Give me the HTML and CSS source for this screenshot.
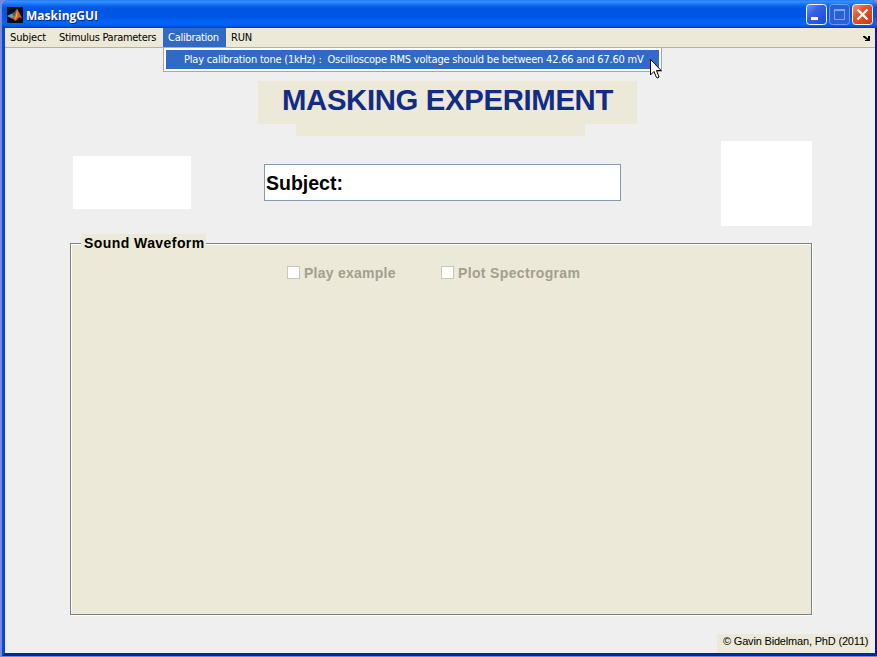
FILE: index.html
```html
<!DOCTYPE html>
<html lang="en">
<head>
<meta charset="utf-8">
<title>MaskingGUI</title>
<link rel="stylesheet" href="styles.css">
</head>
<body>
<div class="window">
  <header class="titlebar">
    <svg class="logo" width="16" height="16" viewBox="0 0 16 16">
      <rect width="16" height="16" fill="#070b12"/>
      <path d="M0 9 L5 6.500 L8 9 L5 11.500 Z" fill="#5fa0b8"/>
      <path d="M5 6.500 Q8 5 10 1.500 L9 8 L7 10 Z" fill="#35657a"/>
      <path d="M10 1.500 Q12 5 15.500 12 Q13 9.500 11 11.500 Q9 14.500 7.500 13.500 Q7 12 5 11.500 Q9 8 10 1.500Z" fill="#d65a22"/>
      <path d="M10 2 Q9.500 8 7.500 13 Q11.500 10 10 2Z" fill="#f8b04a"/>
    </svg>
    <span class="title">MaskingGUI</span>
    <div class="controls">
      <svg class="btn" width="21" height="21" viewBox="0 0 21 21">
        <defs>
          <linearGradient id="blue" x1="0" y1="0" x2="1" y2="1"><stop offset="0" stop-color="#6d96f5"/><stop offset=".4" stop-color="#2f60e6"/><stop offset="1" stop-color="#1b4bd6"/></linearGradient>
          <linearGradient id="red" x1="0" y1="0" x2="1" y2="1"><stop offset="0" stop-color="#ee9b80"/><stop offset=".4" stop-color="#e0532c"/><stop offset="1" stop-color="#c53a12"/></linearGradient>
        </defs>
        <rect x=".5" y=".5" width="20" height="20" rx="3" fill="url(#blue)" stroke="#f0f5ff"/>
        <rect x="5" y="13" width="7" height="3" fill="#fff"/>
      </svg>
      <svg class="btn" width="21" height="21" viewBox="0 0 21 21">
        <rect x=".5" y=".5" width="20" height="20" rx="3" fill="#2a5fdc" stroke="#6f9bf0"/>
        <path d="M5.500 5V15.500H15.500V5" fill="none" stroke="#7fa2f2"/><path d="M5 6H16" stroke="#7fa2f2" stroke-width="2"/>
      </svg>
      <svg class="btn" width="21" height="21" viewBox="0 0 21 21">
        <rect x=".5" y=".5" width="20" height="20" rx="3" fill="url(#red)" stroke="#f8f2f2"/>
        <path d="M5.500 5.500L15.500 15.500M15.500 5.500L5.500 15.500" stroke="#fff" stroke-width="2.300"/>
      </svg>
    </div>
  </header>
  <nav class="menubar">
    <span class="item subject">Subject</span>
    <span class="item stimulus">Stimulus Parameters</span>
    <div class="item open"><span>Calibration</span>
      <div class="dropdown"><div class="entry">Play calibration tone (1kHz) :&nbsp; Oscilloscope RMS voltage should be between 42.66 and 67.60 mV</div></div>
      <svg class="cursor" width="12" height="20" viewBox="0 0 12 20"><path d="M.5 .5V16L4 12.500L6.500 18.500Q8 19.500 9 18L6.500 11.500H11.200Z" fill="#fff" stroke="#000"/></svg>
    </div>
    <span class="item run">RUN</span>
    <svg class="dock" width="7" height="5" viewBox="0 0 7 5"><path d="M0 0H2L5 2.500V0H7V5H2V4H4L0 1Z" fill="#000"/></svg>
  </nav>
  <main class="canvas">
    <div class="heading"><h1>MASKING EXPERIMENT</h1><div class="strip"></div></div>
    <div class="row">
      <div class="box left"></div>
      <div class="field">Subject:</div>
      <div class="box right"></div>
    </div>
    <section class="panel">
      <h2>Sound Waveform</h2>
      <div class="checks">
        <div class="check play"><i></i><span>Play example</span></div>
        <div class="check plot"><i></i><span>Plot Spectrogram</span></div>
      </div>
    </section>
    <footer><span>© Gavin Bidelman, PhD (2011)</span></footer>
  </main>
</div>
</body>
</html>
```

FILE: styles.css
```css
* { box-sizing: border-box; }
html, body { margin: 0; width: 877px; height: 657px; overflow: hidden; background: #7488dd; }
body { font-family: "DejaVu Sans Condensed", "DejaVu Sans", sans-serif; font-size: 11px; color: #000; }
.window { margin-left: 2px; width: 875px; height: 656px; display: flex; flex-direction: column; background: #efefef; border: solid #0733c9; border-width: 0 2px 3px 3px; border-bottom-color: #0525a5; border-right-color: #0019a8; border-left-color: #0b45dc; border-radius: 7px 7px 0 0; }
.titlebar { margin: 0 -2px 0 -3px; height: 28px; flex: none; display: flex; align-items: center; padding: 1px 4px 0 5px; border-radius: 7px 7px 0 0; background: linear-gradient(#1a6cf0 0, #3a92ff 1px, #2383fb 3px, #0a62ee 6px, #0055e3 9px, #0056e5 17px, #0064f8 22px, #0062f5 25px, #0048cf 27px, #003cb8 28px); }
.title { margin: 2px 0 0 3px; color: #fff; font: bold 12px/16px "Open Sans", sans-serif; text-shadow: 1px 1px #0a2a80; white-space: nowrap; }
.controls { margin-left: auto; display: flex; gap: 2px; }
.btn, .logo { display: block; }
.menubar { height: 20px; flex: none; display: flex; background: #ece9d8; border-bottom: 1px solid #b7b09f; position: relative; line-height: 20px; white-space: nowrap; }
.item { height: 19px; letter-spacing: -.15px; }
.subject { width: 54px; padding-left: 5px; }
.stimulus { width: 104px; letter-spacing: -.3px; }
.open { width: 63px; padding-left: 5px; background: #316ac5; color: #fff; position: relative; letter-spacing: -.27px; }
.run { padding-left: 5px; }
.dock { margin: 8px 5px 0 auto; }
.dropdown { position: absolute; left: 0; top: 20px; width: 499px; height: 24px; background: #fff; border: 1px solid #aca899; border-top: 0; padding: 2px; z-index: 2; }
.entry { height: 19px; background: #316ac5; padding-left: 18px; line-height: 20px; letter-spacing: -.2px; }
.cursor { position: absolute; left: 487px; top: 31px; z-index: 3; }
.canvas { flex: 1; display: flex; flex-direction: column; padding-top: 33px; }
.heading { margin-left: 253px; width: 379px; height: 55px; }
h1 { margin: 0; height: 43px; line-height: 38px; background: #ece9d8; color: #122b87; text-align: center; font-family: "Liberation Sans", sans-serif; font-size: 29.3px; letter-spacing: -.33px; white-space: nowrap; }
.strip { height: 12px; width: 289px; margin-left: 38px; background: #ece9d8; }
.row { display: flex; margin-left: 68px; margin-top: 5px; height: 85px; }
.box { background: #fff; }
.left { width: 118px; height: 53px; margin-top: 15px; }
.field { width: 357px; height: 37px; margin: 23px 100px 0 73px; border: 1px solid #7f9db9; background: #fff; font: bold 19.500px/36px "Liberation Sans", sans-serif; padding-left: 1px; }
.right { width: 91px; height: 85px; }
.panel { margin: 17px 0 0 65px; width: 742px; height: 372px; border: 1px solid #808080; box-shadow: inset 1px 1px #fff, 1px 1px #fff; background: #ece9d8; }
h2 { margin: -10px 0 0 10px; width: 125px; height: 18px; padding-left: 3px; background: #ece9d8; font: bold 14px/19px "Liberation Sans", sans-serif; letter-spacing: .43px; white-space: nowrap; }
.checks { display: flex; margin: 12px 0 0 216px; }
.check { display: flex; align-items: center; height: 17px; color: #a1a08d; font: bold 14px/17px "Liberation Sans", sans-serif; letter-spacing: .35px; white-space: nowrap; }
.check i { width: 13px; height: 13px; background: #fff; border: 1px solid #cac8bb; margin-right: 4px; }
.check span { padding-top: 2px; }
.play { width: 154px; letter-spacing: .25px; }
footer { margin: 19px 5px 0 auto; width: 153px; height: 19px; padding-left: 6px; background: #ece9d8; font: 11px/15px "Liberation Sans", sans-serif; letter-spacing: -.18px; white-space: nowrap; }
```
